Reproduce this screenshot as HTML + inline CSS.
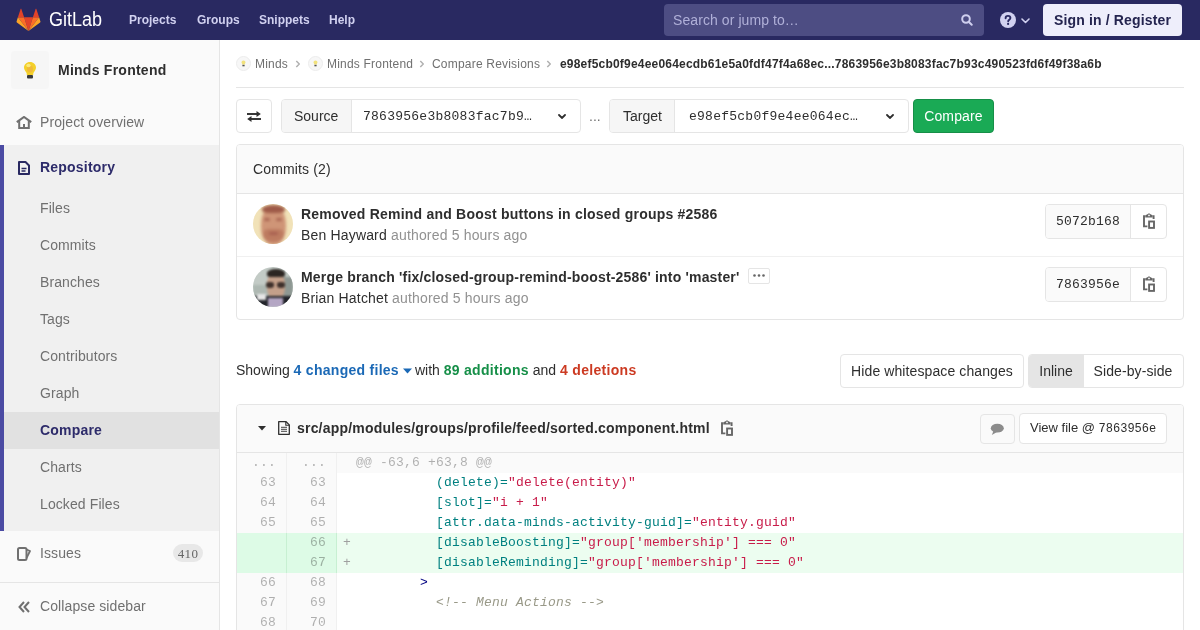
<!DOCTYPE html>
<html><head><meta charset="utf-8">
<style>
*{box-sizing:border-box;margin:0;padding:0}
html,body{width:1200px;height:630px;overflow:hidden;background:#fff}
body{will-change:transform}
body{font-family:"Liberation Sans",sans-serif;font-size:14px;color:#2e2e2e;position:relative}
.abs{position:absolute}
.mono{font-family:"Liberation Mono",monospace}
svg{position:absolute;display:block}
/* header */
#hdr{left:0;top:0;width:1200px;height:40px;background:#292961}
#hdr .nav{top:0;height:40px;line-height:40px;color:#d1d1f0;font-weight:bold;font-size:12px;white-space:nowrap}
#search{left:664px;top:4px;width:320px;height:32px;background:#4d4d83;border-radius:4px;color:#b0b0d8;font-size:14px;line-height:32px;padding-left:9px;letter-spacing:0.08px}
#signin{left:1043px;top:4px;width:139px;height:32px;background:#eeeefb;border-radius:4px;color:#24244f;font-weight:bold;font-size:14px;line-height:32px;text-align:center;letter-spacing:0.15px}
/* sidebar */
#side{left:0;top:40px;width:220px;height:590px;background:#fafafa;border-right:1px solid #e5e5e5}
.si{position:absolute;left:40px;color:#707070;font-size:14px;line-height:20px;white-space:nowrap;letter-spacing:0.1px}
#repo{left:0;top:105px;width:219px;height:386px;background:#f0f0f0;box-shadow:inset 4px 0 0 #4b4ba3}
#cmpact{left:4px;top:372px;width:215px;height:37px;background:#e1e1e1}
/* main */
.bc{position:absolute;top:56px;font-size:12px;color:#707070;line-height:16px;white-space:nowrap;letter-spacing:0.2px}
.btn{position:absolute;border:1px solid #e5e5e5;border-radius:4px;background:#fff}
.t{white-space:nowrap}
.dl{position:absolute;left:237px;width:946px;height:20px;font-family:"Liberation Mono",monospace;font-size:13px;line-height:20px;letter-spacing:0.2px}
.dl .o,.dl .n{position:absolute;top:0;width:50px;height:20px;text-align:right;padding-right:10px;color:rgba(0,0,0,0.3);background:#fafafa;border-right:1px solid #f0f0f0}
.dl .o{left:0}.dl .n{left:50px}
.dl .c{position:absolute;left:100px;top:0;width:846px;height:20px;padding-left:19px;white-space:pre;color:#2e2e2e}
.dl.add .o,.dl.add .n{background:#ddfbe6;border-color:#c7f0d2}
.dl.add .c{background:#ecfdf0}
.na{color:#008080}.st{color:#c81c4a}.tg{color:#000080}.cm{color:#999988;font-style:italic}
</style></head><body>
<!-- HEADER -->
<div id="hdr" class="abs">
  <svg style="left:16px;top:8px" width="25" height="24" viewBox="0 0 36 36">
    <path fill="#e24329" d="M18 34.4l6.6-20.4H11.4z"/>
    <path fill="#fc6d26" d="M18 34.4L11.4 14H2.1z"/>
    <path fill="#fca326" d="M2.1 14L.1 20.2c-.2.6 0 1.2.5 1.5L18 34.4z"/>
    <path fill="#e24329" d="M2.1 14h9.3L7.4 1.7c-.2-.6-1.1-.6-1.3 0z"/>
    <path fill="#fc6d26" d="M18 34.4l6.6-20.4h9.3z"/>
    <path fill="#fca326" d="M33.9 14l2 6.2c.2.6 0 1.2-.5 1.5L18 34.4z"/>
    <path fill="#e24329" d="M33.9 14h-9.3l4-12.3c.2-.6 1.1-.6 1.3 0z"/>
  </svg>
  <div class="abs t" style="left:49px;top:0;line-height:39px;color:#fff;font-size:20px;transform:scaleX(0.9);transform-origin:0 0">GitLab</div>
  <div class="abs nav" style="left:129px">Projects</div>
  <div class="abs nav" style="left:197px">Groups</div>
  <div class="abs nav" style="left:259px">Snippets</div>
  <div class="abs nav" style="left:329px">Help</div>
  <div id="search" class="abs t">Search or jump to…</div>
  <svg style="left:961px;top:14px" width="12" height="12" viewBox="0 0 12 12"><circle cx="5" cy="5" r="3.8" fill="none" stroke="#cfcfee" stroke-width="2"/><path d="M7.7 7.7l3 3" stroke="#cfcfee" stroke-width="2" stroke-linecap="round"/></svg>
  <svg style="left:1000px;top:12px" width="16" height="16" viewBox="0 0 16 16"><circle cx="8" cy="8" r="8" fill="#d1d1f0"/><path d="M5.6 6.2c0-1.4 1.1-2.3 2.4-2.3s2.4.9 2.4 2.1c0 1.6-2.2 1.7-2.2 3.2" fill="none" stroke="#292961" stroke-width="1.9" stroke-linecap="round"/><circle cx="8.1" cy="11.9" r="1.1" fill="#292961"/></svg>
  <svg style="left:1021px;top:18px" width="9" height="6" viewBox="0 0 9 6"><path d="M1 1l3.5 3.5L8 1" fill="none" stroke="#d1d1f0" stroke-width="1.6" stroke-linecap="round" stroke-linejoin="round"/></svg>
  <div id="signin" class="abs t">Sign in / Register</div>
</div>

<!-- SIDEBAR -->
<div id="side" class="abs">
  <div class="abs" style="left:11px;top:11px;width:38px;height:38px;background:#f6f6f6;border-radius:4px"></div>
  <svg style="left:22px;top:21px;filter:blur(0.5px)" width="16" height="19" viewBox="0 0 16 19"><path d="M8 1C4.5 1 2 3.5 2 6.6c0 2.3 1.5 3.6 2.3 5 .4.7.5 1.5.5 2.3h6.4c0-.8.1-1.6.5-2.3.8-1.4 2.3-2.7 2.3-5C14 3.5 11.5 1 8 1z" fill="#f4d02a"/><ellipse cx="8" cy="8" rx="3" ry="3.5" fill="#f0b93a"/><ellipse cx="6.5" cy="4.5" rx="2.2" ry="1.8" fill="#fbe97a"/><rect x="5" y="14" width="6" height="3.5" rx="1" fill="#3a3a3a"/></svg>
  <div class="abs t" style="left:58px;top:20px;font-weight:bold;font-size:14px;color:#2e2e2e;line-height:20px;letter-spacing:0.25px">Minds Frontend</div>
  <svg style="left:16px;top:76px" width="16" height="14" viewBox="0 0 16 14"><path d="M0.8 6.2L8 1l7.2 5.2" fill="none" stroke="#707070" stroke-width="2.1"/><path d="M3.2 5v7h9.6V5" fill="none" stroke="#707070" stroke-width="2"/><rect x="7" y="8" width="2" height="4" fill="#707070"/></svg>
  <div class="si" style="top:72px;letter-spacing:0.1px">Project overview</div>
  <div id="repo" class="abs"></div>
  <div id="cmpact" class="abs"></div>
  <svg style="left:18px;top:121px" width="12" height="14" viewBox="0 0 12 14"><path d="M1 1h6.5L11 4.5V13H1z" fill="none" stroke="#292961" stroke-width="2" stroke-linejoin="round"/><path d="M3.5 7.5h5M3.5 10h4" stroke="#292961" stroke-width="1.6"/></svg>
  <div class="si" style="top:117px;color:#2d2b6a;font-weight:bold;letter-spacing:0.2px">Repository</div>
  <div class="si" style="top:158px">Files</div>
  <div class="si" style="top:195px">Commits</div>
  <div class="si" style="top:232px">Branches</div>
  <div class="si" style="top:269px">Tags</div>
  <div class="si" style="top:306px">Contributors</div>
  <div class="si" style="top:343px">Graph</div>
  <div class="si" style="top:380px;color:#2d2b6a;font-weight:bold;letter-spacing:0.2px">Compare</div>
  <div class="si" style="top:417px">Charts</div>
  <div class="si" style="top:454px">Locked Files</div>
  <svg style="left:17px;top:507px" width="14" height="14" viewBox="0 0 14 14"><rect x="1" y="1" width="8.5" height="12" rx="1.5" fill="none" stroke="#707070" stroke-width="2"/><path d="M9.5 2.5l3.5 1.5-3.5 7" fill="none" stroke="#707070" stroke-width="1.8" stroke-linejoin="round"/></svg>
  <div class="si" style="top:503px">Issues</div>
  <div class="abs" style="left:173px;top:504px;width:30px;height:18px;border-radius:9px;background:#e8e8e8;color:#666;font-family:'Liberation Serif',serif;font-size:13px;line-height:19px;text-align:center;letter-spacing:0.4px">410</div>
  <div class="abs" style="left:0;top:542px;width:219px;height:1px;background:#e5e5e5"></div>
  <svg style="left:18px;top:561px" width="12" height="12" viewBox="0 0 12 12"><path d="M6 1L1.5 6 6 11M11 1L6.5 6 11 11" fill="none" stroke="#707070" stroke-width="2"/></svg>
  <div class="si" style="top:556px">Collapse sidebar</div>
</div>

<!-- BREADCRUMBS -->
<div class="abs" style="left:236px;top:87px;width:948px;height:1px;background:#e5e5e5"></div>

<!-- breadcrumbs -->
<svg style="left:236px;top:56px" width="15" height="15" viewBox="0 0 15 15"><circle cx="7.5" cy="7.5" r="7" fill="#f7f7f7" stroke="#ececec" stroke-width="1"/><path d="M7.5 4.4c-1.2 0-2 .8-2 1.9 0 .9.6 1.3.8 2.1h2.4c.2-.8.8-1.2.8-2.1 0-1.1-.8-1.9-2-1.9z" fill="#f2e27c"/><rect x="6.4" y="8.8" width="2.2" height="1.5" fill="#555"/></svg>
<div class="bc" style="left:255px">Minds</div>
<svg style="left:295px;top:60px" width="5" height="8" viewBox="0 0 5 8"><path d="M1.3 1l3 3-3 3" fill="none" stroke="#b0b0b0" stroke-width="1.5"/></svg>
<svg style="left:308px;top:56px" width="15" height="15" viewBox="0 0 15 15"><circle cx="7.5" cy="7.5" r="7" fill="#f7f7f7" stroke="#ececec" stroke-width="1"/><path d="M7.5 4.4c-1.2 0-2 .8-2 1.9 0 .9.6 1.3.8 2.1h2.4c.2-.8.8-1.2.8-2.1 0-1.1-.8-1.9-2-1.9z" fill="#f2e27c"/><rect x="6.4" y="8.8" width="2.2" height="1.5" fill="#555"/></svg>
<div class="bc" style="left:327px">Minds Frontend</div>
<svg style="left:419px;top:60px" width="5" height="8" viewBox="0 0 5 8"><path d="M1.3 1l3 3-3 3" fill="none" stroke="#b0b0b0" stroke-width="1.5"/></svg>
<div class="bc" style="left:432px">Compare Revisions</div>
<svg style="left:546px;top:60px" width="5" height="8" viewBox="0 0 5 8"><path d="M1.3 1l3 3-3 3" fill="none" stroke="#b0b0b0" stroke-width="1.5"/></svg>
<div class="bc" style="left:560px;color:#2e2e2e;font-weight:bold;font-size:12px;letter-spacing:0.2px">e98ef5cb0f9e4ee064ecdb61e5a0fdf47f4a68ec...7863956e3b8083fac7b93c490523fd6f49f38a6b</div>

<!-- compare form -->
<div class="btn" style="left:236px;top:99px;width:36px;height:34px"></div>
<svg style="left:247px;top:110px" width="14" height="13" viewBox="0 0 14 13"><path d="M0 4h10.5" stroke="#2e2e2e" stroke-width="1.9"/><path d="M9.5 1L13.8 4 9.5 7z" fill="#2e2e2e"/><path d="M3.5 9H14" stroke="#2e2e2e" stroke-width="1.9"/><path d="M4.5 6L0.2 9 4.5 12z" fill="#2e2e2e"/></svg>
<div class="btn" style="left:281px;top:99px;width:300px;height:34px;overflow:hidden">
  <div class="abs" style="left:0;top:0;width:70px;height:32px;background:#f6f6f6;border-right:1px solid #e5e5e5"></div>
  <div class="abs t" style="left:12px;top:8px;font-size:14px;line-height:16px">Source</div>
  <div class="abs mono t" style="left:81px;top:9px;font-size:13px;line-height:16px;letter-spacing:0.25px">7863956e3b8083fac7b9…</div>
</div>
<svg style="left:558px;top:114px" width="8" height="5" viewBox="0 0 8 5"><path d="M1 1l3 3 3-3" fill="none" stroke="#2e2e2e" stroke-width="1.8" stroke-linecap="round"/></svg>
<div class="abs t" style="left:589px;top:108px;font-size:14px;color:#707070">...</div>
<div class="btn" style="left:609px;top:99px;width:300px;height:34px;overflow:hidden">
  <div class="abs" style="left:0;top:0;width:65px;height:32px;background:#f6f6f6;border-right:1px solid #e5e5e5"></div>
  <div class="abs t" style="left:13px;top:8px;font-size:14px;line-height:16px">Target</div>
  <div class="abs mono t" style="left:79px;top:9px;font-size:13px;line-height:16px;letter-spacing:0.25px">e98ef5cb0f9e4ee064ec…</div>
</div>
<svg style="left:886px;top:114px" width="8" height="5" viewBox="0 0 8 5"><path d="M1 1l3 3 3-3" fill="none" stroke="#2e2e2e" stroke-width="1.8" stroke-linecap="round"/></svg>
<div class="abs t" style="left:913px;top:99px;width:81px;height:34px;background:#1aaa55;border:1px solid #168f48;border-radius:4px;color:#fff;font-size:14px;line-height:32px;text-align:center;letter-spacing:0.15px">Compare</div>

<!-- commits panel -->
<div class="abs" style="left:236px;top:144px;width:948px;height:176px;border:1px solid #e5e5e5;border-radius:4px;overflow:hidden">
  <div class="abs" style="left:0;top:0;width:946px;height:49px;background:#fafafa;border-bottom:1px solid #e5e5e5"></div>
  <div class="abs t" style="left:16px;top:15px;line-height:18px;letter-spacing:0.15px">Commits (2)</div>
  <div class="abs" style="left:0;top:111px;width:946px;height:1px;background:#f0f0f0"></div>
</div>
<div class="abs" style="left:253px;top:204px;width:40px;height:40px;border-radius:50%;overflow:hidden;background:#f1e2b8">
  <div class="abs" style="left:0;top:0;width:40px;height:40px;filter:blur(1.4px)">
    <div class="abs" style="left:8px;top:1px;width:25px;height:40px;border-radius:50% 50% 45% 45%;background:#cf9577"></div>
    <div class="abs" style="left:9px;top:1px;width:23px;height:8px;border-radius:50% 50% 35% 35%;background:#9e5a48"></div>
    <div class="abs" style="left:11px;top:14px;width:6px;height:3px;border-radius:2px;background:#a96552"></div>
    <div class="abs" style="left:23px;top:14px;width:6px;height:3px;border-radius:2px;background:#a96552"></div>
    <div class="abs" style="left:10px;top:25px;width:21px;height:13px;border-radius:30% 30% 50% 50%;background:#bd7b60"></div>
    <div class="abs" style="left:16px;top:28px;width:9px;height:3px;border-radius:2px;background:#a86050"></div>
  </div>
</div>
<div class="abs t" style="left:301px;top:205px;font-weight:bold;line-height:18px;letter-spacing:0.22px">Removed Remind and Boost buttons in closed groups #2586</div>
<div class="abs t" style="left:301px;top:226px;line-height:18px;letter-spacing:0.17px">Ben Hayward <span style="color:#919191">authored 5 hours ago</span></div>
<div class="abs" style="left:253px;top:267px;width:40px;height:40px;border-radius:50%;overflow:hidden;background:#c3cbc6">
  <div class="abs" style="left:0;top:0;width:40px;height:40px;filter:blur(1.1px)">
    <div class="abs" style="left:0;top:18px;width:40px;height:12px;background:#aeb8b2"></div>
    <div class="abs" style="left:30px;top:10px;width:10px;height:25px;background:#8e9893"></div>
    <div class="abs" style="left:14px;top:6px;width:18px;height:27px;border-radius:40% 40% 45% 45%;background:#c4a08a"></div>
    <div class="abs" style="left:14px;top:2px;width:18px;height:8px;border-radius:50% 50% 25% 25%;background:#2c2622"></div>
    <div class="abs" style="left:13px;top:15px;width:8px;height:6px;border-radius:40%;background:#3e302b"></div>
    <div class="abs" style="left:24px;top:15px;width:8px;height:6px;border-radius:40%;background:#3e302b"></div>
    <div class="abs" style="left:0;top:29px;width:40px;height:11px;background:#23252b"></div>
    <div class="abs" style="left:4px;top:27px;width:9px;height:6px;background:#e6e6e6"></div>
    <div class="abs" style="left:15px;top:31px;width:15px;height:9px;background:#b4a6c4"></div>
  </div>
</div>
<div class="abs t" style="left:301px;top:268px;font-weight:bold;line-height:18px;letter-spacing:0.18px">Merge branch 'fix/closed-group-remind-boost-2586' into 'master'</div>
<div class="btn" style="left:748px;top:268px;width:22px;height:16px;border-radius:2px"></div>
<svg style="left:753px;top:274px" width="12" height="3" viewBox="0 0 12 3"><circle cx="1.5" cy="1.5" r="1.3" fill="#666"/><circle cx="6" cy="1.5" r="1.3" fill="#666"/><circle cx="10.5" cy="1.5" r="1.3" fill="#666"/></svg>
<div class="abs t" style="left:301px;top:289px;line-height:18px;letter-spacing:0.17px">Brian Hatchet <span style="color:#919191">authored 5 hours ago</span></div>
<div class="btn" style="left:1045px;top:204px;width:122px;height:35px;overflow:hidden">
  <div class="abs" style="left:0;top:0;width:85px;height:33px;background:#fafafa;border-right:1px solid #e5e5e5"></div>
  <div class="abs mono t" style="left:10px;top:9px;font-size:13px;line-height:16px;letter-spacing:0.2px">5072b168</div>
</div>
<svg style="left:1143px;top:213px" width="12" height="16" viewBox="0 0 12 16"><path d="M2.4 4.6V2.2L4 1.6 6 0.2l2 1.4 1.6.6v2.4z" fill="#666"/><rect x="5.2" y="1.7" width="1.6" height="1.5" fill="#fff"/><path d="M2.4 3.2H1v10.2h3.4M9.6 3.2H10.6v2.8" fill="none" stroke="#666" stroke-width="1.9"/><rect x="6.1" y="8.5" width="4.9" height="6.4" fill="none" stroke="#666" stroke-width="1.9"/></svg>
<div class="btn" style="left:1045px;top:267px;width:122px;height:35px;overflow:hidden">
  <div class="abs" style="left:0;top:0;width:85px;height:33px;background:#fafafa;border-right:1px solid #e5e5e5"></div>
  <div class="abs mono t" style="left:10px;top:9px;font-size:13px;line-height:16px;letter-spacing:0.2px">7863956e</div>
</div>
<svg style="left:1143px;top:276px" width="12" height="16" viewBox="0 0 12 16"><path d="M2.4 4.6V2.2L4 1.6 6 0.2l2 1.4 1.6.6v2.4z" fill="#666"/><rect x="5.2" y="1.7" width="1.6" height="1.5" fill="#fff"/><path d="M2.4 3.2H1v10.2h3.4M9.6 3.2H10.6v2.8" fill="none" stroke="#666" stroke-width="1.9"/><rect x="6.1" y="8.5" width="4.9" height="6.4" fill="none" stroke="#666" stroke-width="1.9"/></svg>

<!-- showing -->
<div class="abs t" style="left:236px;top:361px;line-height:18px">Showing <span style="color:#1b69b6;font-weight:bold;letter-spacing:0.28px">4 changed files</span><svg style="position:relative;display:inline-block;vertical-align:middle;margin:0 3px 0 4px" width="9" height="6" viewBox="0 0 9 6"><path d="M0 0.5h9L4.5 5.5z" fill="#1b69b6"/></svg>with <span style="color:#168f48;font-weight:bold;letter-spacing:0.28px">89 additions</span> and <span style="color:#cc3a22;font-weight:bold;letter-spacing:0.32px">4 deletions</span></div>
<div class="btn t" style="left:840px;top:354px;width:184px;height:34px;line-height:32px;text-align:center;letter-spacing:0.1px">Hide whitespace changes</div>
<div class="btn" style="left:1028px;top:354px;width:156px;height:34px;overflow:hidden">
  <div class="abs t" style="left:0;top:0;width:55px;height:32px;background:#e5e5e5;border-right:1px solid #e5e5e5;line-height:32px;text-align:center">Inline</div>
  <div class="abs t" style="left:54px;top:0;width:100px;height:32px;line-height:32px;text-align:center;letter-spacing:0.1px">Side-by-side</div>
</div>

<!-- file -->
<div class="abs" style="left:236px;top:404px;width:948px;height:240px;border:1px solid #e5e5e5;border-radius:4px;overflow:hidden">
  <div class="abs" style="left:0;top:0;width:946px;height:48px;background:#fafafa;border-bottom:1px solid #e5e5e5"></div>
</div>
<svg style="left:258px;top:426px" width="8" height="5" viewBox="0 0 8 5"><path d="M0 0h8L4 4.6z" fill="#2e2e2e"/></svg>
<svg style="left:278px;top:421px" width="12" height="14" viewBox="0 0 12 14"><path d="M0.7 0.7h7.4l3.2 3.2v9.4H0.7z" fill="none" stroke="#2e2e2e" stroke-width="1.3" stroke-linejoin="round"/><path d="M7.8 0.8v3.4h3.4" fill="none" stroke="#2e2e2e" stroke-width="1.1"/><path d="M3 6.3h6M3 8.3h6M3 10.3h6" stroke="#2e2e2e" stroke-width="0.9"/></svg>
<div class="abs t" style="left:297px;top:419px;font-weight:bold;line-height:18px;letter-spacing:0.2px">src/app/modules/groups/profile/feed/sorted.component.html</div>
<svg style="left:721px;top:420px" width="12" height="16" viewBox="0 0 12 16"><path d="M2.4 4.6V2.2L4 1.6 6 0.2l2 1.4 1.6.6v2.4z" fill="#666"/><rect x="5.2" y="1.7" width="1.6" height="1.5" fill="#fafafa"/><path d="M2.4 3.2H1v10.2h3.4M9.6 3.2H10.6v2.8" fill="none" stroke="#666" stroke-width="1.9"/><rect x="6.1" y="8.5" width="4.9" height="6.4" fill="none" stroke="#666" stroke-width="1.9"/></svg>
<div class="btn" style="left:980px;top:414px;width:35px;height:30px;background:#fafafa"></div>
<svg style="left:990px;top:423px" width="14" height="13" viewBox="0 0 14 13"><ellipse cx="7.3" cy="5.2" rx="6.5" ry="4.4" fill="#8c8c8c"/><path d="M3.5 8L1.8 12 7 9z" fill="#8c8c8c"/></svg>
<div class="btn t" style="left:1019px;top:413px;width:148px;height:31px;line-height:28px;font-size:13px;padding-left:10px">View file @ <span class="mono" style="font-size:12px">7863956e</span></div>
<div class="dl hunk" style="top:453px"><div class="o">...</div><div class="n">...</div><div class="c" style="background:#fafafa"><span style="color:rgba(0,0,0,0.3)">@@ -63,6 +63,8 @@</span></div></div>
<div class="dl " style="top:473px"><div class="o">63</div><div class="n">63</div><div class="c">          <span class="na">(delete)=</span><span class="st">"delete(entity)"</span></div></div>
<div class="dl " style="top:493px"><div class="o">64</div><div class="n">64</div><div class="c">          <span class="na">[slot]=</span><span class="st">"i + 1"</span></div></div>
<div class="dl " style="top:513px"><div class="o">65</div><div class="n">65</div><div class="c">          <span class="na">[attr.data-minds-activity-guid]=</span><span class="st">"entity.guid"</span></div></div>
<div class="dl add" style="top:533px"><div class="o"></div><div class="n">66</div><div class="c"><span class="abs" style="left:6px;top:0;color:#a0a0a0">+</span>          <span class="na">[disableBoosting]=</span><span class="st">"group['membership'] === 0"</span></div></div>
<div class="dl add" style="top:553px"><div class="o"></div><div class="n">67</div><div class="c"><span class="abs" style="left:6px;top:0;color:#a0a0a0">+</span>          <span class="na">[disableReminding]=</span><span class="st">"group['membership'] === 0"</span></div></div>
<div class="dl " style="top:573px"><div class="o">66</div><div class="n">68</div><div class="c">        <span class="tg">&gt;</span></div></div>
<div class="dl " style="top:593px"><div class="o">67</div><div class="n">69</div><div class="c">          <span class="cm">&lt;!-- Menu Actions --&gt;</span></div></div>
<div class="dl " style="top:613px"><div class="o">68</div><div class="n">70</div><div class="c"></div></div>
</body></html>
